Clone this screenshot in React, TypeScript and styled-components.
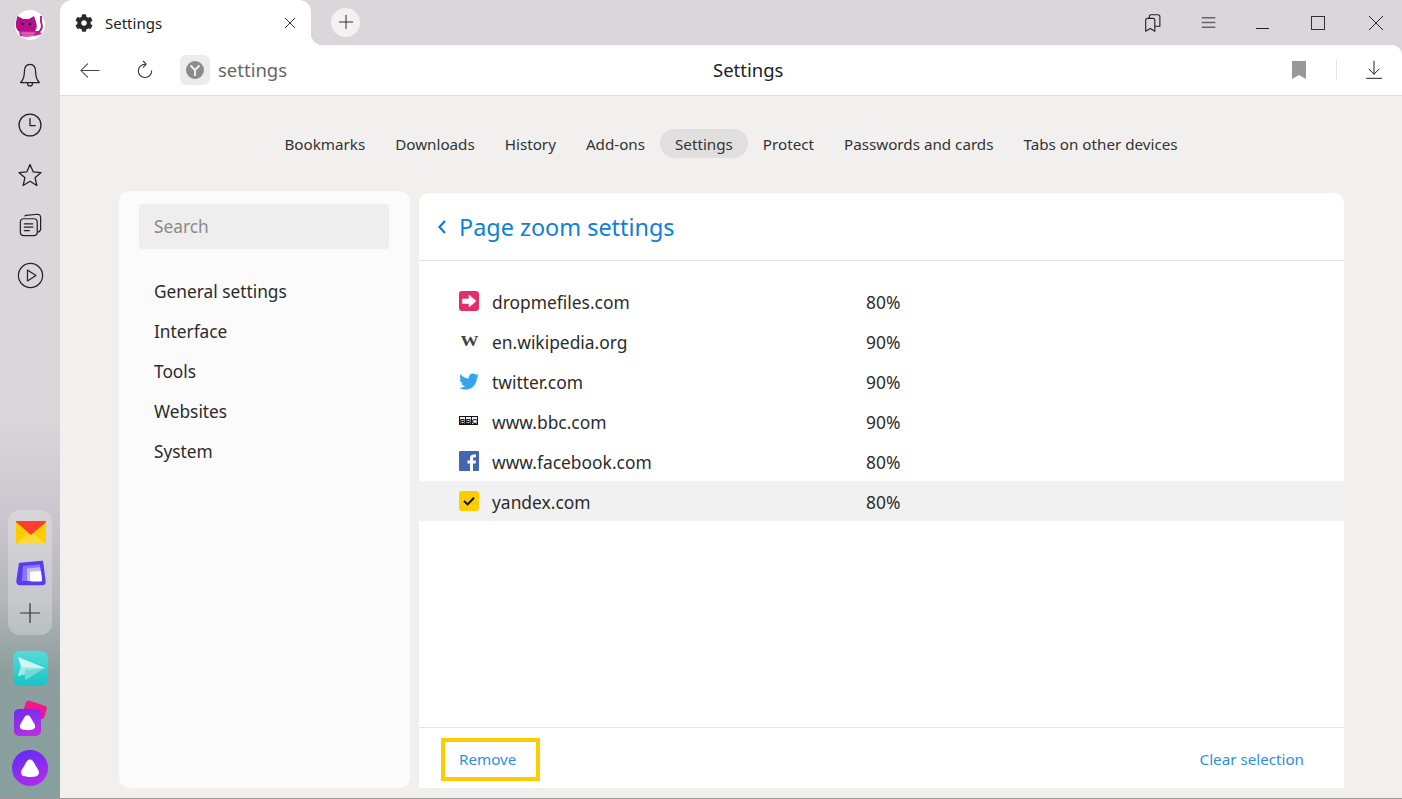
import React from 'react';
import styled, { createGlobalStyle } from 'styled-components';
import { FaCog, FaTwitter } from 'react-icons/fa';

const NAV_ITEMS = ['Bookmarks', 'Downloads', 'History', 'Add-ons', 'Settings', 'Protect', 'Passwords and cards', 'Tabs on other devices'];
const SECTIONS = ['General settings', 'Interface', 'Tools', 'Websites', 'System'];

const GlobalStyle = createGlobalStyle`
  html, body { margin: 0; padding: 0; height: 100%; overflow: hidden; }
  body { font-family: "Noto Sans", "Open Sans", "Liberation Sans", sans-serif; color: #2b2b2b; }
`;

function Glyph({ size = 24, children, stroke = '#222', width = 1.2 }: { size?: number; children: React.ReactNode; stroke?: string; width?: number }) {
  return (
    <svg width={size} height={size} viewBox="0 0 24 24" fill="none" stroke={stroke} strokeWidth={width} strokeLinecap="round" strokeLinejoin="round">
      {children}
    </svg>
  );
}

function CatLogo() {
  return (
    <svg width="30" height="30" viewBox="0 0 30 30">
      <circle cx="15" cy="15" r="15" fill="#fff" />
      <path d="M1 12 L2.5 6 L8 9 H14 L19 6 L21 12 Q23 17 20 21 Q11 24 3 21 Q0 17 1 12 Z" fill="#b5108a" />
      <path d="M4 21 H24 L27 24 Q15 28 5 26 Z" fill="#c81a94" />
      <path d="M24 22 Q28.5 18 26 12 L26 6" stroke="#b5108a" strokeWidth="1.8" fill="none" />
      <circle cx="7.5" cy="14" r="1.3" fill="#222" />
      <circle cx="15" cy="14" r="1.3" fill="#222" />
      <path d="M6 23 H20 M7 25 H19" stroke="#f3b4dc" strokeWidth="0.8" />
    </svg>
  );
}

function MailIcon() {
  return (
    <svg width="30" height="23" viewBox="0 0 30 23">
      <rect width="30" height="23" fill="#ffcc00" />
      <path d="M0 23 L15 10 L30 23 Z" fill="#ffd83a" />
      <path d="M0 0 H30 V1 L15 14 L0 1 Z" fill="#fc3f2d" />
    </svg>
  );
}

function DiskIcon() {
  return (
    <svg width="30" height="26" viewBox="0 0 30 26">
      <path d="M4 4 L26 2 L28.5 22 Q28.5 24 26 24 H4 Q1.5 24 1.5 21 Z" fill="#5a3cf0" stroke="#5a3cf0" strokeWidth="2.4" strokeLinejoin="round" />
      <path d="M7 6 L24 4.5 L26 21 H6 Z" fill="#8a76f8" />
      <path d="M11 8.5 L24 7 L26 21 H11 Z" fill="#c3b9fb" />
      <path d="M14 13 Q14 11.5 15.5 11.5 L25 11 L26 20 Q26 21.5 24.5 21.5 H15.5 Q14 21.5 14 20 Z" fill="#fff" />
    </svg>
  );
}

function SendIcon() {
  return (
    <svg width="35" height="35" viewBox="0 0 35 35">
      <defs>
        <linearGradient id="sendBg" x1="0" y1="0" x2="0" y2="1">
          <stop offset="0" stopColor="#55dcd8" />
          <stop offset="1" stopColor="#18c4c4" />
        </linearGradient>
      </defs>
      <rect width="35" height="35" rx="7" fill="url(#sendBg)" />
      <path d="M5 6 L32 17 L5 25 L8 16 Z" fill="#d6f6f5" />
      <path d="M8 16 L32 17 L5 25 Z" fill="#9fe9e6" />
      <path d="M12 19 L32 17 L12 29 Z" fill="#6fdcd9" />
    </svg>
  );
}

function AliceDrop({ size }: { size: number }) {
  return (
    <svg width={size} height={size} viewBox="0 0 20 20">
      <path d="M10 1.5 C12.5 1.5 13.5 3.5 15 6.5 C17 10 19 12 19 14.5 C19 18.5 14 19 10 19 C6 19 1 18.5 1 14.5 C1 12 3 10 5 6.5 C6.5 3.5 7.5 1.5 10 1.5 Z" fill="#fff" />
    </svg>
  );
}

function ChevronLeft() {
  return (
    <svg width="10" height="16" viewBox="0 0 10 16" fill="none" stroke="#0f7fd8" strokeWidth="2.2">
      <path d="M8 2 L2.5 8 L8 14" />
    </svg>
  );
}

function DropMeFilesIcon() {
  return (
    <svg width="20" height="20" viewBox="0 0 20 20">
      <rect width="20" height="20" rx="3" fill="#e22f6c" />
      <path d="M3.5 8 H10 V4 L17 10 L10 16 V12.4 H3.5 Z" fill="#fff" stroke="#fff" strokeWidth="0.6" strokeLinejoin="round" />
    </svg>
  );
}

function BbcIcon() {
  return (
    <svg width="20" height="20" viewBox="0 0 20 20">
      <rect x="0" y="5" width="19" height="9" fill="#111" />
      <rect x="1" y="6" width="5" height="7" fill="#eee" />
      <rect x="7" y="6" width="5" height="7" fill="#eee" />
      <rect x="13" y="6" width="5" height="7" fill="#eee" />
      <BbcLetters x="3.5" y="12.6">B</BbcLetters>
      <BbcLetters x="9.5" y="12.6">B</BbcLetters>
      <BbcLetters x="15.5" y="12.6">C</BbcLetters>
    </svg>
  );
}

function FacebookIcon() {
  return (
    <svg width="20" height="20" viewBox="0 0 20 20">
      <rect width="20" height="20" rx="1" fill="#4267b2" />
      <path d="M14 20 V12.5 H16.5 L17 9.5 H14 V7.8 Q14 6.3 15.5 6.3 H17 V3.6 Q16 3.4 14.8 3.4 Q11 3.4 11 7.3 V9.5 H8.5 V12.5 H11 V20 Z" fill="#fff" />
    </svg>
  );
}

function YandexCheckIcon() {
  return (
    <svg width="20" height="20" viewBox="0 0 20 20">
      <rect width="20" height="20" rx="3" fill="#ffcc00" />
      <path d="M5 10 L8.6 13.4 L15 6.8" fill="none" stroke="#111" strokeWidth="2" />
    </svg>
  );
}

const SITES: { host: string; zoom: string; icon: React.ReactNode; selected?: boolean }[] = [
  { host: 'dropmefiles.com', zoom: '80%', icon: <DropMeFilesIcon /> },
  { host: 'en.wikipedia.org', zoom: '90%', icon: <WikiMark>W</WikiMark> },
  { host: 'twitter.com', zoom: '90%', icon: <FaTwitter size={21} color="#35a4ea" /> },
  { host: 'www.bbc.com', zoom: '90%', icon: <BbcIcon /> },
  { host: 'www.facebook.com', zoom: '80%', icon: <FacebookIcon /> },
  { host: 'yandex.com', zoom: '80%', icon: <YandexCheckIcon />, selected: true },
];

export default function App() {
  return (
    <Screen>
      <GlobalStyle />
      <Sidebar>
        <Avatar><CatLogo /></Avatar>
        <SideButton>
          <Glyph size={30} width={1}>
            <path d="M12 3.5 C8.5 3.5 7.5 6.5 7.5 9.5 C7.5 13.5 6.5 16 4.5 18 H19.5 C17.5 16 16.5 13.5 16.5 9.5 C16.5 6.5 15.5 3.5 12 3.5 Z" />
            <path d="M10 18.5 C10 21.5 14 21.5 14 18.5" />
          </Glyph>
        </SideButton>
        <SideButton>
          <Glyph size={28} width={1.1}>
            <circle cx="12" cy="12" r="9.4" />
            <path d="M12 6.5 V12.5 H16.5" />
          </Glyph>
        </SideButton>
        <SideButton>
          <Glyph size={28} width={1.1}>
            <path d="M12 3 L14.7 9.3 L21.5 9.9 L16.3 14.3 L17.9 21 L12 17.4 L6.1 21 L7.7 14.3 L2.5 9.9 L9.3 9.3 Z" />
          </Glyph>
        </SideButton>
        <SideButton>
          <Glyph size={27} width={1.1}>
            <rect x="3" y="6" width="15" height="15" rx="3" />
            <path d="M7 3.5 Q7 3 8 2.9 L18 2 Q21 2 21 5 V15 Q21 17 18.5 18" />
            <path d="M6.5 10.5 H14 M6.5 13.5 H14 M6.5 16.5 H11" />
          </Glyph>
        </SideButton>
        <SideButton>
          <Glyph size={29} width={1}>
            <circle cx="12" cy="12" r="10" />
            <path d="M9.5 7.5 L16.5 12 L9.5 16.5 Z" />
          </Glyph>
        </SideButton>
        <AppGroup>
          <AppTile><MailIcon /></AppTile>
          <AppTile><DiskIcon /></AppTile>
          <Glyph size={24} stroke="#333" width={1.2}><path d="M12 2.5 V21.5 M2.5 12 H21.5" /></Glyph>
        </AppGroup>
        <DockApps>
          <SendIcon />
          <AliceStack>
            <AliceBack />
            <AliceSquare><AliceDrop size={17} /></AliceSquare>
          </AliceStack>
          <AliceRound><AliceDrop size={20} /></AliceRound>
        </DockApps>
      </Sidebar>

      <Main>
        <TabStrip>
          <ActiveTab>
            <FaCog size={18} color="#2a2a2a" />
            <TabLabel>Settings</TabLabel>
            <Glyph size={16} width={1.4}><path d="M5 5 L19 19 M19 5 L5 19" /></Glyph>
          </ActiveTab>
          <NewTab>
            <Glyph size={16} width={1.4}><path d="M12 2 V22 M2 12 H22" /></Glyph>
          </NewTab>
          <WindowControls>
            <CollectionsSlot>
              <Glyph size={22}>
                <path d="M4 9 Q4 7 6 7 H12 Q14 7 14 9 V21 L9 18 L4 21 Z" />
                <path d="M8 7 V5 Q8 3 10 3 H17 Q19.5 3 19.5 5 V15.5 L14 15.5" />
              </Glyph>
            </CollectionsSlot>
            <Glyph size={15} stroke="#666" width={2.4}><path d="M2 4.5 H22 M2 12 H22 M2 19.5 H22" /></Glyph>
            <MinimizeBar />
            <MaximizeBox />
            <Glyph size={18} width={1.3}><path d="M3 3 L21 21 M21 3 L3 21" /></Glyph>
          </WindowControls>
        </TabStrip>

        <Toolbar>
          <AddressSide>
            <Glyph size={23} stroke="#444" width={1.1}><path d="M22 12 H3 M10 5 L3 12 L10 19" /></Glyph>
            <ReloadSlot>
              <Glyph size={20} stroke="#333" width={1.3}>
                <path d="M12 5 A8 8 0 1 0 20 13" />
                <path d="M10 1.5 L13.5 5 L10 8.5" />
              </Glyph>
            </ReloadSlot>
            <SiteBadge>
              <svg width="18" height="18" viewBox="0 0 18 18">
                <circle cx="9" cy="9" r="9" fill="#8b8b8b" />
                <path d="M4.5 4.5 L9 9 L13.5 4.5 M9 9 V15" fill="none" stroke="#eee" strokeWidth="2" />
              </svg>
            </SiteBadge>
            <AddressText>settings</AddressText>
          </AddressSide>
          <PageTitle>Settings</PageTitle>
          <ToolbarEnd>
            <svg width="14" height="18" viewBox="0 0 14 18"><path d="M0 0 H14 V18 L7 14 L0 18 Z" fill="#999" /></svg>
            <ToolbarDivider />
            <Glyph size={20} stroke="#222" width={1.2}><path d="M12 1.5 V17 M6 11 L12 17 L18 11 M3 22 H21" /></Glyph>
          </ToolbarEnd>
        </Toolbar>

        <Content>
          <TopNav>
            {NAV_ITEMS.map((item) => (
              <NavItem key={item} $active={item === 'Settings'}>{item}</NavItem>
            ))}
          </TopNav>
          <Panels>
            <SectionCard>
              <SearchBox>Search</SearchBox>
              <SectionList>
                {SECTIONS.map((s) => <SectionLink key={s}>{s}</SectionLink>)}
              </SectionList>
            </SectionCard>
            <DetailCard>
              <DetailHeader>
                <ChevronLeft />
                <DetailTitle>Page zoom settings</DetailTitle>
              </DetailHeader>
              <SiteList>
                {SITES.map((site) => (
                  <SiteRow key={site.host} $selected={site.selected}>
                    <SiteIcon>{site.icon}</SiteIcon>
                    <SiteHost>{site.host}</SiteHost>
                    <SiteZoom>{site.zoom}</SiteZoom>
                  </SiteRow>
                ))}
              </SiteList>
              <DetailFooter>
                <RemoveButton>Remove</RemoveButton>
                <FooterLink>Clear selection</FooterLink>
              </DetailFooter>
            </DetailCard>
          </Panels>
        </Content>
      </Main>
    </Screen>
  );
}

function WikiMark({ children }: { children: React.ReactNode }) {
  return <WikiLetter>{children}</WikiLetter>;
}

const BbcLetters = styled.text`
  font-family: "Liberation Sans", sans-serif;
  font-size: 7.6px;
  font-weight: 700;
  text-anchor: middle;
  fill: #000;
`;

const Screen = styled.div`
  display: flex;
  width: 1402px;
  height: 799px;
  box-sizing: border-box;
  border-bottom: 1px solid #9a9a9a;
  overflow: hidden;
  background: #dbd6da;
`;

const Sidebar = styled.aside`
  width: 60px;
  flex: none;
  display: flex;
  flex-direction: column;
  align-items: center;
  padding-top: 10px;
  box-sizing: border-box;
  background: linear-gradient(180deg, #dbd6da 0%, #dbd6da 52%, #c9c6cd 65%, #b5b7ba 75%, #8d9e9d 84%, #87a09f 100%);
`;

const Avatar = styled.div`
  height: 30px;
  margin-bottom: 10px;
`;

const SideButton = styled.div`
  width: 60px;
  height: 50px;
  flex: none;
  display: flex;
  align-items: center;
  justify-content: center;
`;

const AppGroup = styled.div`
  width: 44px;
  height: 125px;
  margin-top: auto;
  box-sizing: border-box;
  padding: 11px 0 10px;
  display: flex;
  flex-direction: column;
  align-items: center;
  justify-content: space-between;
  border-radius: 12px;
  background: rgba(255, 255, 255, 0.25);
`;

const AppTile = styled.div`
  display: flex;
  margin-left: 2px;
`;

const DockApps = styled.div`
  display: flex;
  flex-direction: column;
  align-items: center;
  gap: 14px;
  margin-top: 16px;
  padding-bottom: 12px;
`;

const AliceStack = styled.div`
  position: relative;
  width: 36px;
  height: 36px;
  display: flex;
  align-items: flex-end;
`;

const AliceBack = styled.div`
  position: absolute;
  right: 2px;
  top: 3px;
  width: 22px;
  height: 14px;
  border-radius: 3px;
  background: #f0188f;
  transform: rotate(18deg);
`;

const AliceSquare = styled.div`
  position: relative;
  width: 27px;
  height: 27px;
  margin-left: 2px;
  border-radius: 5px;
  display: flex;
  align-items: center;
  justify-content: center;
  background: linear-gradient(160deg, #6a2df5, #c12fe0);
`;

const AliceRound = styled.div`
  width: 36px;
  height: 36px;
  border-radius: 50%;
  display: flex;
  align-items: center;
  justify-content: center;
  background: linear-gradient(160deg, #5a2cf8, #bb2be4);
`;

const Main = styled.div`
  flex: 1;
  min-width: 0;
  display: flex;
  flex-direction: column;
`;

const TabStrip = styled.div`
  height: 45px;
  flex: none;
  display: flex;
  align-items: center;
`;

const ActiveTab = styled.div`
  position: relative;
  width: 251px;
  height: 45px;
  box-sizing: border-box;
  padding: 0 13px 0 15px;
  display: flex;
  align-items: center;
  background: #fff;
  border-radius: 12px 12px 0 0;

  &::after {
    content: '';
    position: absolute;
    right: -12px;
    bottom: 0;
    width: 12px;
    height: 12px;
    background: radial-gradient(circle at 100% 0, transparent 12px, #fff 12.5px);
  }
`;

const TabLabel = styled.span`
  flex: 1;
  margin-left: 12px;
  font-size: 15px;
  color: #222;
`;

const NewTab = styled.div`
  width: 29px;
  height: 29px;
  margin-left: 20px;
  margin-bottom: 1px;
  border-radius: 50%;
  background: #f3f1f2;
  display: flex;
  align-items: center;
  justify-content: center;
`;

const WindowControls = styled.div`
  margin-left: auto;
  padding-right: 17px;
  display: flex;
  align-items: center;
  gap: 40px;
`;

const CollectionsSlot = styled.div`
  display: flex;
  margin-right: -3px;
`;

const MinimizeBar = styled.div`
  width: 13px;
  height: 1px;
  margin: 12px 2px 0 0;
  background: #222;
`;

const MaximizeBox = styled.div`
  width: 12px;
  height: 12px;
  margin-right: 2px;
  border: 1.3px solid #333;
`;

const Toolbar = styled.div`
  height: 51px;
  flex: none;
  box-sizing: border-box;
  display: flex;
  align-items: center;
  background: #fff;
  border-bottom: 1px solid #dcdcdc;
  border-radius: 0 10px 0 0;
`;

const AddressSide = styled.div`
  width: 653px;
  flex: none;
  display: flex;
  align-items: center;
  padding-left: 18px;
  box-sizing: border-box;
`;

const ReloadSlot = styled.div`
  display: flex;
  margin-left: 34px;
`;

const SiteBadge = styled.div`
  width: 30px;
  height: 30px;
  margin-left: 25px;
  border-radius: 6px;
  background: #ececec;
  display: flex;
  align-items: center;
  justify-content: center;
`;

const AddressText = styled.span`
  margin-left: 8px;
  font-size: 18.5px;
  line-height: 30px;
  color: #666;
`;

const PageTitle = styled.div`
  font-size: 18.5px;
  line-height: 30px;
  color: #222;
`;

const ToolbarEnd = styled.div`
  margin-left: auto;
  display: flex;
  align-items: center;
  padding-right: 18px;
`;

const ToolbarDivider = styled.div`
  width: 1px;
  height: 20px;
  margin: 0 27px 0 30px;
  background: #e4e4e4;
`;

const Content = styled.main`
  flex: 1;
  min-height: 0;
  display: flex;
  flex-direction: column;
  background: #f1f0ee;
`;

const TopNav = styled.nav`
  height: 95px;
  flex: none;
  box-sizing: border-box;
  padding-top: 33px;
  display: flex;
  justify-content: center;
  align-items: flex-start;
`;

const NavItem = styled.div<{ $active?: boolean }>`
  height: 29px;
  line-height: 31px;
  padding: 0 15px;
  border-radius: 15px;
  font-size: 15.2px;
  color: #333;
  background: ${({ $active }) => ($active ? '#e2e0de' : 'transparent')};
`;

const Panels = styled.div`
  flex: 1;
  min-height: 0;
  display: flex;
  gap: 9px;
  padding: 0 58px 10px 59px;
`;

const SectionCard = styled.section`
  width: 291px;
  flex: none;
  box-sizing: border-box;
  padding: 13px 21px 0 20px;
  border-radius: 10px;
  background: #fbfbfb;
`;

const SearchBox = styled.div`
  height: 45px;
  line-height: 45px;
  padding-left: 15px;
  border-radius: 4px;
  font-size: 17.3px;
  color: #8a8a8a;
  background: #eeeeee;
`;

const SectionList = styled.div`
  margin-top: 22px;
  padding-left: 15px;
`;

const SectionLink = styled.div`
  height: 40px;
  line-height: 42px;
  font-size: 17.3px;
  color: #2b2b2b;
`;

const DetailCard = styled.section`
  flex: 1;
  margin-top: 2px;
  display: flex;
  flex-direction: column;
  border-radius: 10px 10px 0 0;
  background: #fff;
`;

const DetailHeader = styled.div`
  height: 68px;
  flex: none;
  box-sizing: border-box;
  display: flex;
  align-items: center;
  gap: 12px;
  padding-left: 18px;
  border-bottom: 1px solid #e4e4e4;
`;

const DetailTitle = styled.h1`
  margin: 0;
  font-size: 23.4px;
  font-weight: 400;
  color: #0f7fd8;
`;

const SiteList = styled.div`
  flex: 1;
  padding-top: 20px;
`;

const SiteRow = styled.div<{ $selected?: boolean }>`
  height: 40px;
  display: flex;
  align-items: center;
  padding-left: 40px;
  background: ${({ $selected }) => ($selected ? '#f1f1f1' : 'transparent')};
`;

const SiteIcon = styled.div`
  width: 20px;
  height: 20px;
  display: flex;
  align-items: center;
  justify-content: center;
`;

const WikiLetter = styled.span`
  font-family: "Liberation Serif", serif;
  font-size: 15px;
  font-weight: 700;
  line-height: 20px;
  color: #444;
  transform: scaleX(1.2);
`;

const SiteHost = styled.span`
  width: 374px;
  margin-left: 13px;
  padding-top: 2px;
  font-size: 17.4px;
  color: #2b2b2b;
`;

const SiteZoom = styled.span`
  padding-top: 2px;
  font-size: 17.4px;
  color: #2b2b2b;
`;

const DetailFooter = styled.div`
  height: 61px;
  flex: none;
  box-sizing: border-box;
  display: flex;
  align-items: center;
  justify-content: space-between;
  padding: 2px 40px 0 22px;
  border-top: 1px solid #e4e4e4;
`;

const RemoveButton = styled.div`
  width: 99px;
  height: 43px;
  box-sizing: border-box;
  padding-left: 14px;
  line-height: 34px;
  border: 4px solid #ffcc00;
  font-size: 15.2px;
  color: #2e8fe0;
`;

const FooterLink = styled.div`
  font-size: 15.2px;
  color: #2e8fe0;
`;
